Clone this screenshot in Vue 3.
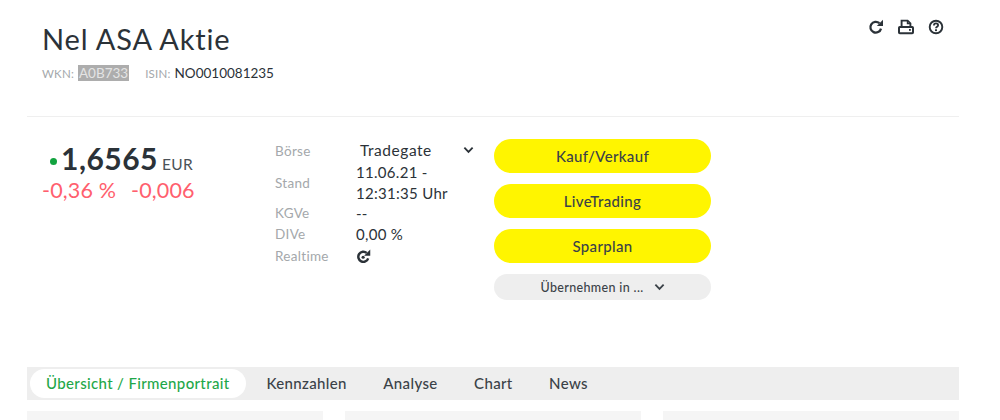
<script setup>
const rows = [
  { label: 'Börse', value: 'Tradegate', select: true },
  { label: 'Stand', value: '11.06.21 - 12:31:35 Uhr' },
  { label: 'KGVe', value: '--' },
  { label: 'DIVe', value: '0,00 %' },
]
const tabs = ['Kennzahlen', 'Analyse', 'Chart', 'News']
const actions = ['Kauf/Verkauf', 'LiveTrading', 'Sparplan']
</script>

<template>
  <div class="page">
    <header class="head">
      <div class="head-text">
        <h1 class="title">Nel ASA Aktie</h1>
        <div class="ids">
          <span class="id-label">WKN:</span>
          <span class="wkn">A0B733</span>
          <span class="id-label isin">ISIN:</span>
          <span class="id-value">NO0010081235</span>
        </div>
      </div>
      <div class="tools">
        <svg class="tool" viewBox="0 0 16 16" width="16" height="16"><path d="M13 9.6A5.4 5.4 0 1 1 11.4 4.2" fill="none" stroke="#2b3238" stroke-width="2.3"/><path d="M8.8 7h6.2V.8z" fill="#2b3238"/></svg>
        <svg class="tool" viewBox="0 0 16 16" width="16" height="16"><path d="M3.6 8V1.6h6l2.8 2.8V8" fill="none" stroke="#2b3238" stroke-width="1.9"/><path d="M9.4 1.6v3h3" fill="none" stroke="#2b3238" stroke-width="1.2"/><rect x="1" y="8" width="14" height="6.2" rx="0.8" fill="none" stroke="#2b3238" stroke-width="2"/><rect x="11" y="10" width="1.8" height="1.8" fill="#2b3238"/></svg>
        <svg class="tool" viewBox="0 0 16 16" width="16" height="16"><circle cx="8" cy="8" r="6.3" fill="none" stroke="#2b3238" stroke-width="1.9"/><path d="M5.9 6.5c0-1.3 1-2.1 2.1-2.1s2.1.7 2.1 1.8c0 1.5-2.1 1.5-2.1 3" fill="none" stroke="#2b3238" stroke-width="1.8"/><rect x="7" y="10.3" width="2" height="1.8" fill="#2b3238"/></svg>
      </div>
    </header>

    <section class="quote">
      <div class="price-col">
        <div class="price-line">
          <span class="dot"></span>
          <span class="price">1,6565</span>
          <span class="currency">EUR</span>
        </div>
        <div class="change">
          <span>-0,36 %</span>
          <span>-0,006</span>
        </div>
      </div>

      <div class="facts">
        <template v-for="row in rows" :key="row.label">
          <span class="fact-label">{{ row.label }}</span>
          <span class="fact-value" :class="{ selectbox: row.select }">
            {{ row.value }}
            <svg v-if="row.select" class="chev" viewBox="0 0 12 8" width="11" height="8"><path d="M1.5 1.5 6 6l4.5-4.5" fill="none" stroke="#2b3238" stroke-width="2"/></svg>
          </span>
        </template>
        <span class="fact-label last">Realtime</span>
        <span class="fact-value last">
          <svg class="rt" viewBox="0 0 16 16" width="15" height="15"><path d="M13 10A5.4 5.4 0 1 1 11.4 4.2" fill="none" stroke="#2b3238" stroke-width="2.6"/><path d="M8.6 7.2h6.6V.6z" fill="#2b3238"/><circle cx="7.6" cy="8.8" r="1.7" fill="#2b3238"/></svg>
        </span>
      </div>

      <div class="actions">
        <button v-for="a in actions" :key="a" class="btn">{{ a }}</button>
        <button class="btn-grey">
          Übernehmen in ...
          <svg viewBox="0 0 12 8" width="11" height="8"><path d="M1.5 1.5 6 6l4.5-4.5" fill="none" stroke="#3b4248" stroke-width="2"/></svg>
        </button>
      </div>
    </section>

    <nav class="tabs">
      <span class="tab active">Übersicht / Firmenportrait</span>
      <span v-for="t in tabs" :key="t" class="tab">{{ t }}</span>
    </nav>

    <div class="cards">
      <div class="card"></div>
      <div class="card"></div>
      <div class="card"></div>
    </div>
  </div>
</template>

<style>
html, body { margin: 0; background: #fff; overflow: hidden; }
</style>

<style scoped>
.page {
  width: 932px;
  height: 420px;
  margin-left: 27px;
  overflow: hidden;
  font-family: Lato, "Open Sans", sans-serif;
  color: #2b3238;
}
.head {
  display: flex;
  justify-content: space-between;
  height: 116px;
  border-bottom: 1px solid #efefef;
}
.head-text { padding: 22px 0 0 15px; }
.title {
  margin: 0;
  font-size: 29px;
  line-height: 34px;
  font-weight: 400;
  letter-spacing: 0.85px;
}
.ids {
  display: flex;
  align-items: baseline;
  margin-top: 9px;
  font-size: 13.5px;
  line-height: 16px;
}
.id-label { font-size: 11.5px; color: #a4a8ab; letter-spacing: 0.2px; }
.wkn { background: #adadad; color: #e4e4e4; margin-left: 4px; padding: 0 1px; }
.isin { margin-left: 16px; }
.id-value { margin-left: 4px; }
.tools { display: flex; gap: 14px; padding: 19px 15px 0 0; }
.tool { display: block; }

.quote { display: flex; height: 250px; padding-top: 27px; box-sizing: border-box; }
.price-col { width: 233px; padding-left: 15px; box-sizing: border-box; }
.price-line { display: flex; align-items: baseline; height: 28px; }
.dot {
  width: 7px; height: 7px; border-radius: 50%; background: #12a33f;
  margin: 0 4px 0 8px; align-self: center; position: relative; top: 3px;
}
.price { font-size: 30px; line-height: 28px; font-weight: 700; letter-spacing: 0.5px; }
.currency { font-size: 15.5px; color: #4b5258; margin-left: 4px; letter-spacing: 0.3px; }
.change { display: flex; gap: 15px; margin-top: 6px; font-size: 21.5px; line-height: 24px; color: #ff5f6e; letter-spacing: 0.15px; }

.facts {
  display: grid;
  grid-template-columns: 81px 127px;
  grid-auto-rows: min-content;
  align-items: center;
  align-content: start;
  margin: -5px 0 0 15px;
  width: 208px;
  height: 150px;
}
.fact-label { font-size: 13.5px; line-height: 20px; color: #a4a8ab; letter-spacing: 0.3px; }
.fact-value { font-size: 15px; line-height: 20.5px; letter-spacing: 0.3px; }
.last { margin-top: 2px; }
.selectbox { display: flex; justify-content: space-between; align-items: center; padding-left: 4px; height: 23px; font-size: 15.5px; letter-spacing: 0.55px; }
.chev { position: relative; top: -1px; margin-right: 9px; }
.rt { display: block; }

.actions { display: flex; flex-direction: column; gap: 11px; width: 217px; margin: -5px 0 0 11px; }
.btn, .btn-grey { border: 0; border-radius: 17px; font-family: inherit; padding: 0; color: #3b4248; }
.btn {
  height: 34px;
  background: #fff500;
  font-size: 15px;
  font-weight: 500;
  letter-spacing: 0.35px;
}
.btn-grey {
  height: 26px;
  background: #eeeeee;
  font-size: 12.5px;
  font-weight: 500;
  letter-spacing: 0.35px;
  display: flex;
  align-items: center;
  justify-content: center;
  gap: 10px;
}

.tabs {
  display: flex;
  align-items: center;
  height: 33px;
  background: #eeeeee;
  padding: 0 0 0 3px;
  font-size: 15px;
  font-weight: 500;
  letter-spacing: 0.35px;
  color: #3b4248;
}
.tab { margin-right: 36.5px; position: relative; top: -1px; }
.tab.active {
  color: #1fa84a;
  background: #fff;
  border-radius: 15px;
  height: 29px;
  line-height: 29px;
  padding: 0 16px;
  margin-right: 21px;
  top: 0;
}
.cards {
  display: grid;
  grid-template-columns: repeat(3, 296px);
  column-gap: 22px;
  margin-top: 11px;
}
.card { height: 30px; background: #f5f5f5; }
</style>
